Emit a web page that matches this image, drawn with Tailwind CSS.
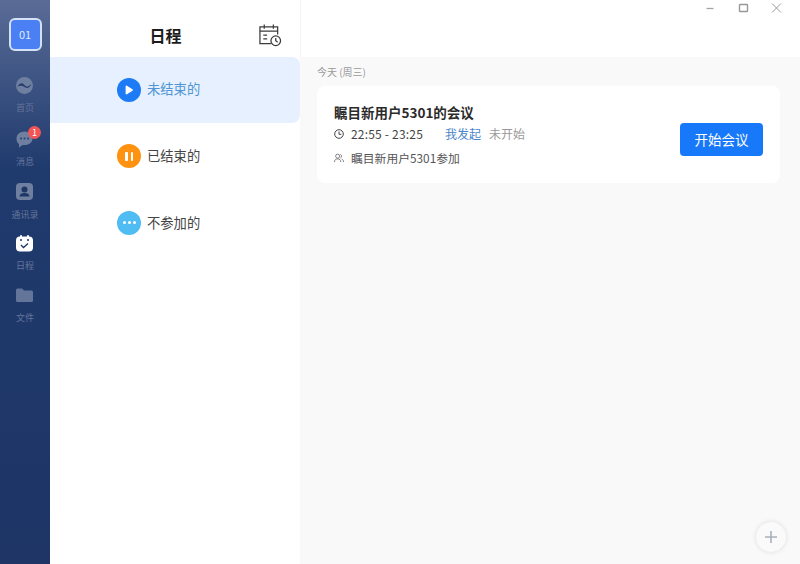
<!DOCTYPE html>
<html lang="zh-CN">
<head>
    <meta charset="UTF-8">
    <title>日程</title>
    <script src="https://cdn.jsdelivr.net/npm/@tailwindcss/browser@4"></script>
</head>
<body class="font-['Noto_Sans_CJK_SC','Noto_Sans',sans-serif] overflow-hidden">
<div class="flex w-[800px] h-[564px] bg-white">
    <!-- left nav -->
    <aside class="w-[50px] shrink-0 flex flex-col items-center bg-gradient-to-b from-[#5a6c96] via-[#1f3a6d] via-[30%] to-[#1e3566]">
        <div class="mt-[18px] w-[33px] h-[33px] rounded-[6px] border-2 border-[#d5e1f8] bg-[#4b80f5] flex items-center justify-center text-[11px] text-[#dfe9ff]">01</div>

        <div class="mt-[26px] flex flex-col items-center">
            <svg class="w-[17px] h-[17px]" viewBox="0 0 17 17"><circle cx="8.500" cy="8.500" r="8.500" fill="#6f7f9f"/><path d="M1.500 9.500C4 5.500 6.500 5.500 8.500 8c2 2.500 4.500 2 7-1.500-1 4-4 5.500-7 3.500-2.500-1.500-4.500-1.500-7-.5z" fill="#2a3f70"/></svg>
            <span class="mt-[8px] text-[9px] leading-[12px] text-[#64759a]">首页</span>
        </div>

        <div class="mt-[17px] relative flex flex-col items-center">
            <svg class="w-[17px] h-[17px]" viewBox="0 0 17 17"><path d="M8.500 0.500C13 0.500 16.500 3.500 16.500 7.500S13 14 8.500 14H6.500L3 16.500V13C1.200 11.800 0.500 9.800 0.500 7.500 0.500 3.500 4 0.500 8.500 0.500z" fill="#6f7f9f"/><circle cx="5" cy="7.500" r="1" fill="#2a3f70"/><circle cx="8.500" cy="7.500" r="1" fill="#2a3f70"/><circle cx="12" cy="7.500" r="1" fill="#2a3f70"/></svg>
            <span class="absolute left-[12px] -top-[5px] w-[13px] h-[13px] rounded-full bg-[#f25555] text-white text-[9px] leading-[13px] text-center">1</span>
            <span class="mt-[8px] text-[9px] leading-[12px] text-[#64759a]">消息</span>
        </div>

        <div class="mt-[15px] flex flex-col items-center">
            <svg class="w-[17px] h-[17px]" viewBox="0 0 17 17"><rect width="17" height="17" rx="4" fill="#6f7f9f"/><circle cx="8.500" cy="6.500" r="3" fill="#1f3766"/><path d="M3.500 13.500c0-2.500 2-3.500 5-3.500s5 1 5 3.500z" fill="#1f3766"/></svg>
            <span class="mt-[9px] text-[9px] leading-[12px] text-[#64759a]">通讯录</span>
        </div>

        <div class="mt-[14px] flex flex-col items-center">
            <svg class="w-[17px] h-[17px]" viewBox="0 0 17 17"><rect y="1.500" width="17" height="15" rx="4" fill="#fff"/><rect x="4" y="0" width="2" height="4" rx="1" fill="#fff"/><rect x="11" y="0" width="2" height="4" rx="1" fill="#fff"/><circle cx="5" cy="5" r="1" fill="#1f3766"/><circle cx="12" cy="5" r="1" fill="#1f3766"/><path d="M5 10l2.500 2.500L12 8.500" fill="none" stroke="#1f3766" stroke-width="1.300"/></svg>
            <span class="mt-[8px] text-[9px] leading-[12px] text-[#64759a]">日程</span>
        </div>

        <div class="mt-[16px] flex flex-col items-center">
            <svg class="w-[17px] h-[14px]" viewBox="0 0 17 14"><path d="M0 2a1.500 1.500 0 0 1 1.500-1.500H6L8 2.500H15.500A1.500 1.500 0 0 1 17 4V12.500A1.500 1.500 0 0 1 15.500 14H1.500A1.500 1.500 0 0 1 0 12.500z" fill="#64759a"/></svg>
            <span class="mt-[10px] text-[9px] leading-[12px] text-[#64759a]">文件</span>
        </div>
    </aside>

    <!-- schedule filters -->
    <section class="w-[250px] shrink-0 flex flex-col">
        <div class="relative h-[57px] flex items-center justify-center pt-[12px] pr-[19px]">
            <h1 class="text-[16px] leading-[22px] font-bold text-[#1c1c1c]">日程</h1>
            <svg class="absolute left-[208px] top-[24px] w-[24px] h-[23px]" viewBox="0 0 24 24" fill="none" stroke="#3c3c3c" stroke-width="1.300">
                <path d="M13 20.500H1.500V3H20V11"/><path d="M1.500 7.500H20M6 .5V5M15.500 .5V5M5 11.500H9M5 15.500H9"/>
                <circle cx="18" cy="17.500" r="5"/><path d="M18 14.500V17.500L20 19"/>
            </svg>
        </div>
        <div class="h-[66px] rounded-r-[8px] bg-[#e6f0fe] flex items-center pl-[67px] gap-[6px]">
            <span class="w-[24px] h-[24px] rounded-full bg-[#1c7bf5] flex items-center justify-center">
                <svg class="w-[10px] h-[10px]" viewBox="0 0 10 10"><path d="M2.500 1.500L8 5 2.500 8.500z" fill="#fff" stroke="#fff" stroke-width="1.800" stroke-linejoin="round"/></svg>
            </span>
            <span class="text-[13.300px] leading-[18px] pb-[2px] text-[#4f94d4]">未结束的</span>
        </div>
        <div class="h-[66px] flex items-center pl-[67px] gap-[6px]">
            <span class="w-[24px] h-[24px] rounded-full bg-[#ff9210] flex items-center justify-center gap-[3px]">
                <i class="block w-[2.500px] h-[9px] rounded-[1px] bg-white"></i><i class="block w-[2.500px] h-[9px] rounded-[1px] bg-white"></i>
            </span>
            <span class="text-[13.300px] leading-[18px] text-[#444]">已结束的</span>
        </div>
        <div class="h-[67px] flex items-center pl-[67px] gap-[6px]">
            <span class="w-[24px] h-[24px] rounded-full bg-[#4fbcf4] flex items-center justify-center gap-[2px]">
                <i class="block w-[3px] h-[3px] rounded-full bg-white"></i><i class="block w-[3px] h-[3px] rounded-full bg-white"></i><i class="block w-[3px] h-[3px] rounded-full bg-white"></i>
            </span>
            <span class="text-[13.300px] leading-[18px] text-[#444]">不参加的</span>
        </div>
    </section>

    <!-- meetings -->
    <main class="relative flex-1 flex flex-col">
        <div class="h-[57px] bg-white flex justify-end shrink-0 border-l border-[#f5f5f6]">
            <div class="flex items-start pt-[3px] pr-[18px] gap-[22px]">
                <svg class="w-[11px] h-[11px]" viewBox="0 0 11 11"><path d="M1.500 5.500H8.500" stroke="#a5a5a5" stroke-width="1.300"/></svg>
                <svg class="w-[11px] h-[11px]" viewBox="0 0 11 11"><rect x="1.500" y="1.500" width="8" height="7" rx=".5" fill="none" stroke="#999" stroke-width="1.400"/></svg>
                <svg class="w-[11px] h-[11px]" viewBox="0 0 11 11"><path d="M1 .5L10 9.500M10 .5L1 9.500" stroke="#999" stroke-width="1"/></svg>
            </div>
        </div>
        <div class="flex-1 bg-[#f9f9fa] pl-[17px] pr-[20px]">
            <p class="text-[10px] leading-[14px] text-[#9a9a9a] mt-[8px]">今天 (周三)</p>
            <div class="mt-[7px] h-[97px] rounded-[8px] bg-white flex items-center justify-between pl-[17px] pr-[17px]">
                <div class="flex flex-col">
                    <h2 class="text-[13.500px] leading-[18px] font-bold text-[#2b2b2b]">瞩目新用户5301的会议</h2>
                    <div class="mt-[5px] flex items-center text-[12px] leading-[16px]">
                        <svg class="w-[10px] h-[10px] mr-[7px]" viewBox="0 0 10 10" fill="none" stroke="#444"><circle cx="5" cy="5" r="4.300"/><path d="M5 2.500V5.300H7.300"/></svg>
                        <span class="text-[#444] w-[94px] tracking-[0.2px]">22:55 - 23:25</span>
                        <span class="text-[#4a85c9]">我发起</span>
                        <span class="ml-[8px] text-[#999]">未开始</span>
                    </div>
                    <div class="mt-[8px] flex items-center text-[11.800px] leading-[16px] text-[#555]">
                        <svg class="w-[10px] h-[10px] mr-[7px]" viewBox="0 0 11 10" fill="none" stroke="#666" stroke-width=".9"><circle cx="4" cy="3" r="2.200"/><path d="M.5 9.500C.5 7 2 6 4 6s3.500 1 3.500 3.500M7 1a2.200 2.200 0 0 1 0 4M8.500 6.200c1.300.5 2 1.600 2 3.300"/></svg>
                        <span>瞩目新用户5301参加</span>
                    </div>
                </div>
                <button class="mt-[10px] w-[83px] h-[33px] rounded-[4px] bg-[#1878fa] text-white text-[13.500px]">开始会议</button>
            </div>
        </div>
        <button class="absolute left-[456px] top-[522px] w-[30px] h-[30px] rounded-full bg-[#fafafb] shadow-[0_0_5px_rgba(0,0,0,0.12)] flex items-center justify-center">
            <svg class="w-[12px] h-[12px]" viewBox="0 0 12 12"><path d="M6 0V12M0 6H12" stroke="#a9b1bc" stroke-width="1.600"/></svg>
        </button>
    </main>
</div>
</body>
</html>
